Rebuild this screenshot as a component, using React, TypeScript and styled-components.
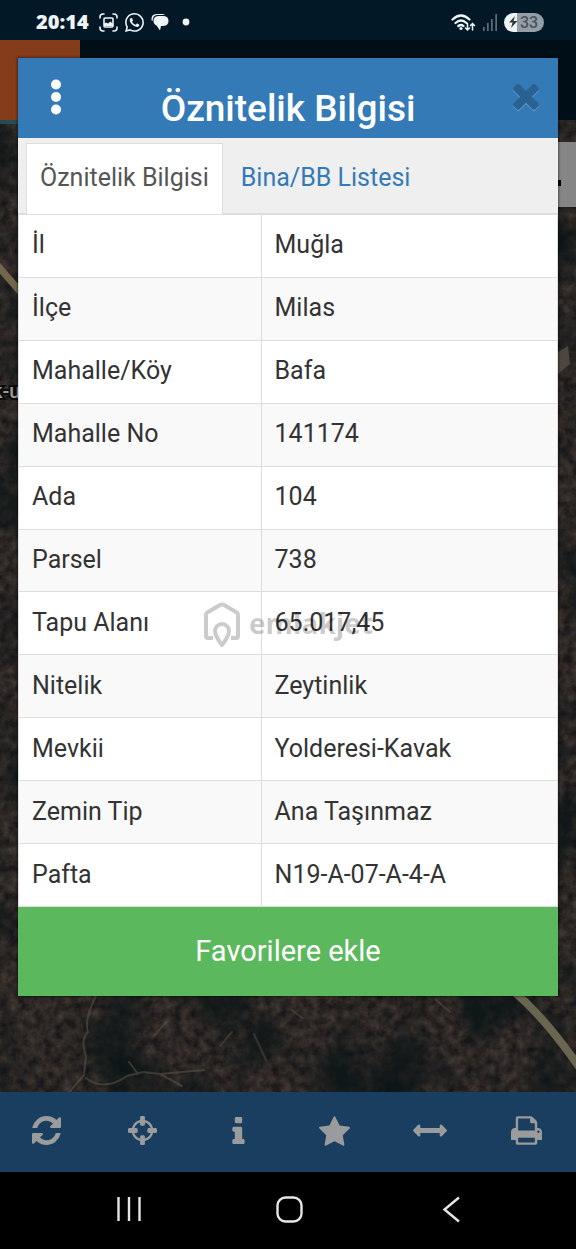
import React from "react";
import styled, { createGlobalStyle } from "styled-components";
import { BsWhatsapp } from "react-icons/bs";

const GlobalStyle = createGlobalStyle`
  *, *::before, *::after { box-sizing: border-box; }
  body { margin: 0; background: #000; font-family: Roboto, "Noto Sans", sans-serif; }
  button { font: inherit; border: 0; padding: 0; margin: 0; background: none; cursor: pointer; }
  svg { display: block; }
`;

const Screen = styled.main`
  position: relative;
  display: grid;
  min-height: 100vh;
  overflow: hidden;
`;

const AppLayer = styled.div`
  grid-area: 1 / 1;
  display: flex;
  flex-direction: column;
  min-width: 0;
`;

const DialogLayer = styled.div`
  grid-area: 1 / 1;
  position: relative;
  z-index: 2;
  align-self: start;
  padding: 58px 18px 0;
  margin-bottom: 252px;
  min-width: 0;
`;

const StatusBar = styled.header`
  display: flex;
  align-items: center;
  justify-content: space-between;
  height: 40px;
  padding: 4px 32px 0 36px;
  background: #021826;
  color: #eef4f8;
`;

const StatusGroup = styled.div<{ $gap: number }>`
  display: flex;
  align-items: center;
  gap: ${(p) => p.$gap}px;
`;

const Clock = styled.time`
  width: 56px;
  font: 800 20px/24px "Open Sans", sans-serif;
`;

const Battery = styled.span`
  display: flex;
  align-items: center;
  width: 40px;
  height: 19px;
  padding-left: 4px;
  border-radius: 10px;
  background: linear-gradient(90deg, #eef3f6 13px, #949ea6 13px);
  color: #4b535b;
  font: 500 16px/19px Roboto, sans-serif;
  gap: 2px;
`;

const AppHeader = styled.div`
  height: 80px;
  background: #000e18;
`;

const Brand = styled.div`
  width: 80px;
  height: 84px;
  background: #843c1a;
  border-bottom: 4px solid #234c56;
  position: relative;
  z-index: 1;
`;

const MapArea = styled.div`
  position: relative;
  flex: 1;
  background: #292624;
`;

const MapDrawing = styled.svg`
  position: absolute;
  inset: 0;
  width: 100%;
  height: 100%;
`;

const MapControl = styled.div`
  position: absolute;
  top: 22px;
  right: 0;
  width: 20px;
  height: 65px;
  background: #858585;
  display: flex;
  align-items: center;
  padding-top: 16px;
  &::before { content: ""; width: 5px; height: 6px; background: #000; }
`;

const Toolbar = styled.nav`
  display: grid;
  grid-template-columns: repeat(6, 1fr);
  height: 80px;
  background: #193e5f;
`;

const ToolButton = styled.button`
  display: flex;
  align-items: center;
  justify-content: center;
  padding: 0 4px 3px 0;
  color: #999b9d;
`;

const SystemNav = styled.nav`
  display: grid;
  grid-template-columns: repeat(3, 1fr);
  height: 77px;
  padding: 0 45px 3px 48px;
  background: #000;
  color: #e6e6e6;
`;

const SystemButton = styled.button`
  display: flex;
  align-items: center;
  justify-content: center;
  color: inherit;
`;

const Dialog = styled.section`
  background: #fff;
  box-shadow: 0 0 2px 1px rgba(0, 0, 0, 0.4);
`;

const DialogHeader = styled.div`
  display: grid;
  grid-template-columns: 76px 1fr 76px;
  height: 80px;
  background: #337ab7;
  color: #fff;
`;

const HeaderButton = styled.button<{ $end?: boolean }>`
  display: flex;
  align-items: center;
  justify-content: center;
  justify-self: ${(p) => (p.$end ? "end" : "stretch")};
  width: ${(p) => (p.$end ? "64px" : "auto")};
  padding-bottom: 2px;
  color: ${(p) => (p.$end ? "#2a6193" : "#fff")};
`;

const Title = styled.h1`
  margin: 0;
  padding-top: 31px;
  font-size: 37px;
  line-height: 40px;
  font-weight: 500;
  text-align: center;
  white-space: nowrap;
`;

const Tabs = styled.div`
  display: flex;
  align-items: flex-end;
  height: 76px;
  padding: 0 8px;
  background: #efefef;
  box-shadow: inset 0 -1px #ddd;
`;

const Tab = styled.button<{ $active?: boolean }>`
  height: 71px;
  padding: 0 ${(p) => (p.$active ? 13 : 17)}px 2px;
  border: 1px solid ${(p) => (p.$active ? "#ddd" : "transparent")};
  border-bottom: 0;
  background: ${(p) => (p.$active ? "#fff" : "transparent")};
  color: ${(p) => (p.$active ? "#555" : "#337ab7")};
  font-size: 25px;
  line-height: 36px;
  white-space: nowrap;
`;

const Table = styled.table`
  width: 100%;
  height: 693px;
  table-layout: fixed;
  border-collapse: collapse;
  color: #333;
  font-size: 25px;
  line-height: 36px;
`;

const Row = styled.tr`
  &:nth-child(even) { background: #f9f9f9; }
`;

const Label = styled.th`
  width: 45%;
  padding: 0 13px 1px;
  border: 1px solid #ddd;
  font-weight: 400;
  text-align: left;
`;

const Value = styled.td`
  padding: 0 13px 1px;
  border: 1px solid #ddd;
`;

const FavoriteButton = styled.button`
  display: block;
  width: 100%;
  height: 89px;
  padding-bottom: 2px;
  background: #5cb85c;
  color: #fff;
  font-size: 29px;
  line-height: 40px;
`;

const Watermark = styled.div`
  position: absolute;
  z-index: 3;
  inset: 0;
  display: flex;
  align-items: center;
  justify-content: center;
  gap: 8px;
  color: #000;
  opacity: 0.2;
  pointer-events: none;
`;

const WatermarkText = styled.span`
  padding-bottom: 4px;
  font: 700 28px/40px "Open Sans", sans-serif;
`;

type Glyph = { label: string; box: string; width: number; height: number; d: string };

const tools: Glyph[] = [
  {
    label: "Yenile", box: "0 0 1536 1536", width: 29, height: 29,
    d: "M1511 928q0 5-1 7-64 268-268 434.5t-478 166.5q-146 0-282.5-55t-243.5-157l-129 129q-19 19-45 19t-45-19-19-45v-448q0-26 19-45t45-19h448q26 0 45 19t19 45-19 45l-137 137q71 66 161 102t187 36q134 0 250-65t186-179q11-17 53-117 8-23 30-23h192q13 0 22.5 9.5t9.5 22.5zm25-800v448q0 26-19 45t-45 19h-448q-26 0-45-19t-19-45 19-45l138-138q-148-137-349-137-134 0-250 65t-186 179q-11 17-53 117-8 23-30 23h-199q-13 0-22.5-9.5t-9.5-22.5v-7q65-268 270-434.5t480-166.5q146 0 284 55.5t245 156.5l130-129q19-19 45-19t45 19 19 45z",
  },
  {
    label: "Konum", box: "0 0 1536 1536", width: 29, height: 29,
    d: "M1197 896h-109q-26 0-45-19t-19-45v-128q0-26 19-45t45-19h109q-32-108-112.5-188.5t-188.5-112.5v109q0 26-19 45t-45 19h-128q-26 0-45-19t-19-45v-109q-108 32-188.5 112.5t-112.5 188.5h109q26 0 45 19t19 45v128q0 26-19 45t-45 19h-109q32 108 112.5 188.5t188.5 112.5v-109q0-26 19-45t45-19h128q26 0 45 19t19 45v109q108-32 188.5-112.5t112.5-188.5zm339-192v128q0 26-19 45t-45 19h-143q-37 161-154.5 278.5t-278.5 154.5v143q0 26-19 45t-45 19h-128q-26 0-45-19t-19-45v-143q-161-37-278.5-154.5t-154.5-278.5h-143q-26 0-45-19t-19-45v-128q0-26 19-45t45-19h143q37-161 154.5-278.5t278.5-154.5v-143q0-26 19-45t45-19h128q26 0 45 19t19 45v143q161 37 278.5 154.5t154.5 278.5h143q26 0 45 19t19 45z",
  },
  {
    label: "Bilgi", box: "0 128 640 1408", width: 13, height: 27,
    d: "M640 1344v128q0 26-19 45t-45 19h-512q-26 0-45-19t-19-45v-128q0-26 19-45t45-19h64v-384h-64q-26 0-45-19t-19-45v-128q0-26 19-45t45-19h384q26 0 45 19t19 45v576h64q26 0 45 19t19 45zm-128-1152v192q0 26-19 45t-45 19h-256q-26 0-45-19t-19-45v-192q0-26 19-45t45-19h256q26 0 45 19t19 45z",
  },
  {
    label: "Favoriler", box: "0 32 1664 1588", width: 31, height: 30,
    d: "M1664 647q0 22-26 48l-363 354 86 500q1 7 1 20 0 21-10.5 35.5t-30.5 14.5q-19 0-40-12l-449-236-449 236q-22 12-40 12-21 0-31.5-14.5t-10.5-35.5q0-6 2-20l86-500-364-354q-25-27-25-48 0-37 56-46l502-73 225-455q19-41 49-41t49 41l225 455 502 73q56 9 56 46z",
  },
  {
    label: "Ölçüm", box: "0 320 1792 640", width: 34, height: 13,
    d: "M1792 640q0 26-19 45l-256 256q-19 19-45 19t-45-19-19-45v-128h-1024v128q0 26-19 45t-45 19-45-19l-256-256q-19-19-19-45t19-45l256-256q19-19 45-19t45 19 19 45v128h1024v-128q0-26 19-45t45-19 45 19l256 256q19 19 19 45z",
  },
  {
    label: "Yazdır", box: "0 128 1664 1536", width: 31, height: 29,
    d: "M384 1536h896v-256h-896v256zm0-640h896v-384h-160q-40 0-68-28t-28-68v-160h-640v640zm1152 64q0-26-19-45t-45-19-45 19-19 45 19 45 45 19 45-19 19-45zm128 0v416q0 13-9.5 22.5t-22.5 9.5h-224v160q0 40-28 68t-68 28h-960q-40 0-68-28t-28-68v-160h-224q-13 0-22.5-9.5t-9.5-22.5v-416q0-79 56.5-135.5t135.5-56.5h64v-544q0-40 28-68t68-28h672q40 0 88 20t76 48l152 152q28 28 48 76t20 88v256h64q79 0 135.5 56.5t56.5 135.5z",
  },
];

const rows: [string, string][] = [
  ["İl", "Muğla"],
  ["İlçe", "Milas"],
  ["Mahalle/Köy", "Bafa"],
  ["Mahalle No", "141174"],
  ["Ada", "104"],
  ["Parsel", "738"],
  ["Tapu Alanı", "65.017,45"],
  ["Nitelik", "Zeytinlik"],
  ["Mevkii", "Yolderesi-Kavak"],
  ["Zemin Tip", "Ana Taşınmaz"],
  ["Pafta", "N19-A-07-A-4-A"],
];

const TIMES =
  "M1188 1106q0 40-28 68l-136 136q-28 28-68 28t-68-28l-294-294-294 294q-28 28-68 28t-68-28l-136-136q-28-28-28-68t28-68l294-294-294-294q-28-28-28-68t28-68l136-136q28-28 68-28t68 28l294 294 294-294q28-28 68-28t68 28l136 136q28 28 28 68t-28 68l-294 294 294 294q28 28 28 68z";

function SatelliteMap() {
  return (
    <MapDrawing viewBox="0 0 576 972" preserveAspectRatio="xMidYMax slice" aria-hidden="true">
      <defs>
        <filter id="soil" x="0" y="0" width="100%" height="100%" colorInterpolationFilters="sRGB">
          <feTurbulence type="fractalNoise" baseFrequency="0.11" numOctaves="5" seed="14" />
          <feColorMatrix values="0.26 0 0 0 0.045  0.21 0.02 0 0 0.037  0.16 0.03 0.03 0 0.033  0 0 0 0 1" />
        </filter>
        <filter id="shade" x="0" y="0" width="100%" height="100%" colorInterpolationFilters="sRGB">
          <feTurbulence type="fractalNoise" baseFrequency="0.014 0.012" numOctaves="5" seed="21" />
          <feColorMatrix values="0 0 0 0 0.05  0 0 0 0 0.085  0 0 0 0 0.09  2.6 0 0 0 -1.15" />
        </filter>
      </defs>
      <rect width="576" height="972" filter="url(#soil)" />
      <rect width="576" height="972" filter="url(#shade)" />
      <g fill="none" strokeLinecap="round">
        <path d="M-2 146 L24 176" stroke="#71664c" strokeWidth="7" />
        <path d="M512 870 Q546 898 584 954" stroke="#69654e" strokeWidth="8" />
        <path d="M96 876 Q84 900 88 912 Q80 920 86 936 L84 955 L68 974 M86 958 Q104 972 127 956 L143 952 L160 954 L204 950 M160 954 L182 966 M129 942 L138 954" stroke="#5f5348" strokeWidth="2" opacity=".55" />
        <path d="M232 912 l-12 14 M254 914 l12 26 M166 902 l-12 14 M436 880 l14 12 M292 890 l10 8" stroke="#5f5348" strokeWidth="2" opacity=".45" />
        <path d="M558 232 l10 -6 l2 18 l-12 10z" fill="#4c463e" />
      </g>
      <text x="-8" y="278" fill="#9a9a9a" stroke="#0c0c0c" strokeWidth="4" paintOrder="stroke" fontFamily="Roboto, sans-serif" fontWeight="500" fontSize="20">k-u</text>
    </MapDrawing>
  );
}

export default function App() {
  return (
    <>
      <GlobalStyle />
      <Screen>
        <AppLayer>
          <StatusBar>
            <StatusGroup $gap={7}>
              <Clock>20:14</Clock>
              <svg width="19" height="19" viewBox="0 0 19 19" fill="none" stroke="currentColor" strokeWidth="1.6" strokeLinecap="round">
                <path d="M1 5V4a3 3 0 0 1 3-3h1M14 1h1a3 3 0 0 1 3 3v1M18 14v1a3 3 0 0 1-3 3h-1M5 18H4a3 3 0 0 1-3-3v-1" />
                <rect x="5" y="5" width="9" height="9" rx="1" />
                <path d="M5 13v-2l2-1.500 2 1L11.500 8.500 14 11v2z" fill="currentColor" stroke="none" />
              </svg>
              <BsWhatsapp size={19} />
              <svg width="18" height="18" viewBox="0 0 18 18" fill="currentColor">
                <path d="M0.500 7Q0 1 5.500 1H11Q13 1 14 2H6Q2 2 1.500 8Q0.500 8 0.500 7z" />
                <path d="M2.500 8Q2.500 3 8 3H12Q17.500 3 17.500 8Q17.500 12.500 12.500 13H10L9 17.500L5.500 12.500Q2.500 11 2.500 8z" />
              </svg>
              <svg width="22" height="8" viewBox="0 0 22 8" fill="currentColor"><circle cx="10" cy="4" r="3.400" /></svg>
            </StatusGroup>
            <StatusGroup $gap={6}>
              <svg width="25" height="19" viewBox="0 0 25 19" fill="none" stroke="currentColor" strokeLinecap="round">
                <path d="M1.500 6.500Q10 -1.500 18.500 6.500M4.500 10Q10 5 15.500 10M7.300 13Q10 11 12.500 13" strokeWidth="2.200" />
                <circle cx="10" cy="15.500" r="1.600" fill="currentColor" stroke="none" />
                <path d="M16.500 10.500v6M14.500 15l2 2 2-2M21.500 17v-6M19.500 12.500l2-2 2 2" strokeWidth="1.500" />
              </svg>
              <svg width="16" height="19" viewBox="0 0 16 19" fill="#5d6d78">
                <path d="M1 14h1.700v4H1zM5 10h1.700v8H5zM9 6h1.700v12H9z" />
                <path d="M13.300 1H15v17h-1.700z" />
              </svg>
              <Battery>
                <svg width="10" height="12" viewBox="0 0 10 12" fill="#353a3e"><path d="M7 0L1 6.500H4.500L3 12L9.500 5H5.500z" /></svg>
                33
              </Battery>
            </StatusGroup>
          </StatusBar>
          <AppHeader><Brand /></AppHeader>
          <MapArea>
            <SatelliteMap />
            <MapControl />
          </MapArea>
          <Toolbar aria-label="Harita araçları">
            {tools.map((t) => (
              <ToolButton key={t.label} type="button" aria-label={t.label}>
                <svg width={t.width} height={t.height} viewBox={t.box} fill="currentColor"><path d={t.d} /></svg>
              </ToolButton>
            ))}
          </Toolbar>
          <SystemNav aria-label="Sistem">
            <SystemButton type="button" aria-label="Son uygulamalar">
              <svg width="26" height="26" viewBox="0 0 26 26" fill="none" stroke="currentColor" strokeWidth="2.400"><path d="M2.500 1v24M13 1v24M23.500 1v24" /></svg>
            </SystemButton>
            <SystemButton type="button" aria-label="Ana ekran">
              <svg width="27" height="27" viewBox="0 0 27 27" fill="none" stroke="currentColor" strokeWidth="2.400"><rect x="1.500" y="1.500" width="24" height="24" rx="8" /></svg>
            </SystemButton>
            <SystemButton type="button" aria-label="Geri">
              <svg width="18" height="27" viewBox="0 0 18 27" fill="none" stroke="currentColor" strokeWidth="2.400"><path d="M17 1.500L2.500 13.500L17 25.500" /></svg>
            </SystemButton>
          </SystemNav>
        </AppLayer>

        <DialogLayer>
          <Dialog role="dialog" aria-labelledby="dialog-title">
            <DialogHeader>
              <HeaderButton type="button" aria-label="Menü">
                <svg width="12" height="36" viewBox="0 0 12 36" fill="currentColor">
                  <circle cx="6" cy="5.500" r="5" /><circle cx="6" cy="18" r="5" /><circle cx="6" cy="30.500" r="5" />
                </svg>
              </HeaderButton>
              <Title id="dialog-title">Öznitelik Bilgisi</Title>
              <HeaderButton type="button" aria-label="Kapat" $end>
                <svg width="26" height="27" viewBox="0 150 1188 1240">
                  <path d={TIMES} fill="#6c9fcb" transform="translate(0 48)" />
                  <path d={TIMES} fill="currentColor" />
                </svg>
              </HeaderButton>
            </DialogHeader>
            <Tabs role="tablist">
              <Tab type="button" role="tab" aria-selected="true" $active>Öznitelik Bilgisi</Tab>
              <Tab type="button" role="tab" aria-selected="false">Bina/BB Listesi</Tab>
            </Tabs>
            <Table>
              <tbody>
                {rows.map(([label, value]) => (
                  <Row key={label}>
                    <Label scope="row">{label}</Label>
                    <Value>{value}</Value>
                  </Row>
                ))}
              </tbody>
            </Table>
            <FavoriteButton type="button">Favorilere ekle</FavoriteButton>
          </Dialog>
        </DialogLayer>
        <Watermark aria-hidden="true">
          <svg width="38" height="46" viewBox="0 0 38 46" fill="none" stroke="currentColor" strokeWidth="4" strokeLinejoin="round">
            <path d="M10 36H5Q3 36 3 34V13Q3 11 5 10L17 3Q19 2 21 3L33 10Q35 11 35 13V34Q35 36 33 36H28" />
            <path d="M19 43Q12 34 12 29A7 7 0 0 1 26 29Q26 34 19 43z" />
          </svg>
          <WatermarkText>emlakjet</WatermarkText>
        </Watermark>
      </Screen>
    </>
  );
}
